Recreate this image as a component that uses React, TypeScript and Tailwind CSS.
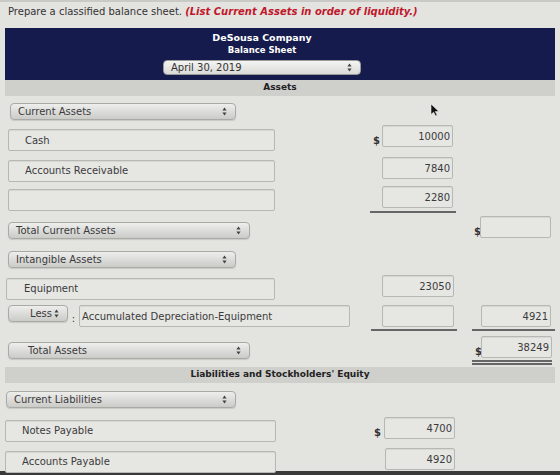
import React from 'react'

const font = "font-['DejaVu_Sans',Verdana,sans-serif]"

function Arrows() {
  return (
    <svg width="5" height="9" viewBox="0 0 5 9" className="shrink-0">
      <path d="M2.5 0.5 L4.6 3.6 L0.4 3.6 Z" fill="#444" />
      <path d="M2.5 8.5 L4.6 5.4 L0.4 5.4 Z" fill="#444" />
    </svg>
  )
}

function Select({ label, className = '', textClass = 'pl-[7px]' }: { label: string; className?: string; textClass?: string }) {
  return (
    <div
      className={`h-[17px] flex items-center justify-between rounded-[4px] border border-[#a9a9a6] bg-linear-to-b from-[#eeeeec] via-[#dcdcda] to-[#cbcbc8] shadow-[0_1px_1px_rgba(0,0,0,0.12)] pr-[8px] text-[10px] text-[#3b3b3b] ${textClass} ${className}`}
    >
      <span>{label}</span>
      <Arrows />
    </div>
  )
}

function TextBox({ value = '', className = '', align = 'left' }: { value?: string; className?: string; align?: 'left' | 'right' }) {
  return (
    <input
      readOnly
      value={value}
      className={`h-[22px] rounded-[2px] border border-[#b7b7b4] bg-[#e6e6e3] shadow-[inset_0_1px_1px_rgba(0,0,0,0.07)] text-[10px] text-[#3b3b3b] outline-none ${
        align === 'right' ? 'text-right pr-[2px]' : ''
      } ${className}`}
    />
  )
}

function Dollar({ className = '' }: { className?: string }) {
  return <span className={`text-[10px] font-bold text-[#333] leading-none pb-[1px] ${className}`}>$</span>
}

function Cursor() {
  return (
    <svg width="10" height="14" viewBox="0 0 10 14" className="absolute left-[430px] top-[103px]">
      <path d="M1 1 L1 11.5 L3.6 9.2 L5.6 13 L7.2 12.2 L5.3 8.6 L8.8 8.4 Z" fill="#111" stroke="#eee" strokeWidth="0.6" />
    </svg>
  )
}

export default function App() {
  return (
    <div className={`relative w-[560px] h-[475px] overflow-hidden bg-[#e3e3e0] ${font}`}>
      <div className="h-[2px] bg-[#c9c9c6]" />
      <p className="pt-[4px] pl-[8px] h-[16px] text-[10px] leading-[12px] text-[#333]">
        Prepare a classified balance sheet.{' '}
        <span className="font-bold italic text-[#c0182a]">(List Current Assets in order of liquidity.)</span>
      </p>

      {/* statement heading */}
      <div className="mt-[10px] mx-[5px] h-[52px] bg-[#151b4c] flex flex-col items-center pr-[36px] pt-[3px] text-white font-bold">
        <div className="text-[9.5px] leading-[13px]">DeSousa Company</div>
        <div className="text-[8.5px] leading-[12px]">Balance Sheet</div>
        <div className="mt-[4px] w-[198px] h-[15px] rounded-[4px] bg-linear-to-b from-[#f4f4f2] to-[#dadad7] border border-[#999] flex items-center justify-between pl-[7px] pr-[8px] text-[10px] font-normal text-[#333]">
          <span>April 30, 2019</span>
          <Arrows />
        </div>
      </div>
      <div className="mx-[5px] h-[16px] bg-[#cfcfcc] flex items-center justify-center text-[9px] font-bold text-[#222]">
        Assets
      </div>

      {/* current assets */}
      <div className="mt-[7px] flex">
        <Select label="Current Assets" className="ml-[10px] w-[226px]" />
      </div>

      <div className="mt-[5px] flex items-start h-[26px]">
        <div className="w-[370px]">
          <TextBox value="Cash" className="mt-[4px] ml-[8px] w-[267px] pl-[16px]" />
        </div>
        <div className="w-[12px] h-[22px] flex items-end"><Dollar className="ml-[3px]" /></div>
        <TextBox value="10000" align="right" className="w-[71px]" />
      </div>

      <div className="mt-[6px] flex items-start h-[24px]">
        <div className="w-[370px]">
          <TextBox value="Accounts Receivable" className="mt-[2px] ml-[8px] w-[267px] pl-[16px]" />
        </div>
        <div className="w-[12px]" />
        <TextBox value="7840" align="right" className="w-[71px]" />
      </div>

      <div className="mt-[5px] flex items-start h-[27px]">
        <div className="w-[370px]">
          <TextBox className="mt-[3px] ml-[8px] w-[267px]" />
        </div>
        <div className="pl-[12px] pr-[3px] pb-[3px] border-b-2 border-[#666]">
          <TextBox value="2280" align="right" className="w-[71px] block" />
        </div>
      </div>

      <div className="mt-[3px] flex items-start h-[23px]">
        <div className="w-[470px]">
          <Select label="Total Current Assets" className="mt-[6px] ml-[8px] w-[242px]" />
        </div>
        <div className="w-[10px] h-[22px] flex items-end"><Dollar className="ml-[4px]" /></div>
        <TextBox className="w-[71px]" />
      </div>

      {/* long-term assets */}
      <div className="mt-[12px] flex">
        <Select label="Intangible Assets" className="ml-[8px] w-[228px]" />
      </div>

      <div className="mt-[7px] flex items-start h-[23px]">
        <div className="w-[382px]">
          <TextBox value="Equipment" className="mt-[1px] ml-[6px] w-[269px] pl-[17px]" />
        </div>
        <TextBox value="23050" align="right" className="w-[72px]" />
      </div>

      <div className="mt-[7px] flex items-start h-[26px]">
        <div className="w-[371px] flex items-start">
          <Select label="Less" className="ml-[8px] w-[60px]" textClass="pl-[21px]" />
          <span className="w-[11px] text-center text-[10px] leading-none pt-[9px] text-[#333]">:</span>
          <TextBox value="Accumulated Depreciation-Equipment" className="w-[271px] pl-[2px]" />
        </div>
        <div className="pl-[11px] pr-[3px] pb-[2px] border-b-2 border-[#666]">
          <TextBox className="w-[72px] block" />
        </div>
        <div className="w-[15px]" />
        <div className="pl-[9px] pr-[4px] pb-[2px] border-b-2 border-[#666]">
          <TextBox value="4921" align="right" className="w-[70px] block" />
        </div>
      </div>

      <div className="mt-[5px] flex items-start h-[28px]">
        <div className="w-[470px]">
          <Select label="Total Assets" className="mt-[6px] ml-[8px] w-[242px]" textClass="pl-[19px]" />
        </div>
        <div className="flex flex-col">
          <div className="flex items-end">
            <div className="w-[11px] h-[22px] flex items-end"><Dollar className="ml-[5px]" /></div>
            <TextBox value="38249" align="right" className="w-[71px]" />
          </div>
          <div className="mt-[2px] h-[5px] border-y-2 border-[#666] ml-[2px]" />
        </div>
      </div>

      {/* liabilities */}
      <div className="mt-[3px] mx-[5px] h-[16px] bg-[#cfcfcc] flex items-center justify-center text-[9px] font-bold text-[#222]">
        Liabilities and Stockholders&apos; Equity
      </div>

      <div className="mt-[8px] flex">
        <Select label="Current Liabilities" className="ml-[6px] w-[230px]" />
      </div>

      <div className="mt-[9px] flex items-start h-[23px]">
        <div className="w-[372px]">
          <TextBox value="Notes Payable" className="ml-[5px] w-[271px] pl-[16px]" />
        </div>
        <div className="w-[12px] h-[22px] flex items-end"><Dollar className="ml-[2px]" /></div>
        <TextBox value="4700" align="right" className="w-[71px]" />
      </div>

      <div className="mt-[8px] flex items-start h-[22px]">
        <div className="w-[385px]">
          <TextBox value="Accounts Payable" className="ml-[5px] w-[271px] pl-[16px]" />
        </div>
        <TextBox value="4920" align="right" className="w-[70px]" />
      </div>

      <div className="mt-[1px] h-[6px] bg-[#3a3a3a]" />

      <Cursor />
    </div>
  )
}
